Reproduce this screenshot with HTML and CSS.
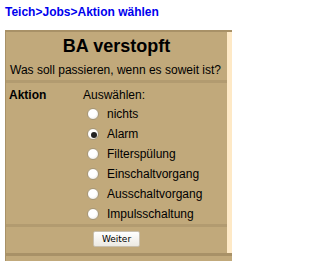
FILE: index.html
```html
<!DOCTYPE html>
<html lang="de">
<head>
<meta charset="utf-8">
<title>Aktion wählen</title>
<link rel="stylesheet" href="styles.css">
</head>
<body>
<div class="crumb"><a href="#">Teich</a>&gt;<a href="#">Jobs</a>&gt;<a href="#">Aktion wählen</a></div>
<div class="frame">
  <div class="cols">
    <div class="main">
      <div class="head">
        <h1 class="title">BA verstopft</h1>
        <p class="sub">Was soll passieren, wenn es soweit ist?</p>
      </div>
      <div class="sep"></div>
      <div class="form">
        <div class="label">Aktion</div>
        <div class="choices">
          <div class="choose">Auswählen:</div>
          <label class="opt"><input type="radio" name="a" class="radio"> nichts</label>
          <label class="opt"><input type="radio" name="a" class="radio" checked> Alarm</label>
          <label class="opt"><input type="radio" name="a" class="radio"> Filterspülung</label>
          <label class="opt"><input type="radio" name="a" class="radio"> Einschaltvorgang</label>
          <label class="opt"><input type="radio" name="a" class="radio"> Ausschaltvorgang</label>
          <label class="opt"><input type="radio" name="a" class="radio"> Impulsschaltung</label>
        </div>
      </div>
      <div class="sep"></div>
      <div class="actions"><button class="btn" type="button">Weiter</button></div>
    </div>
    <div class="side"></div>
  </div>
  <div class="line"></div>
  <div class="more"></div>
</div>
</body>
</html>
```

FILE: styles.css
```css
html, body { margin: 0; padding: 0; background: #fff; }
body { padding: 5px 0 0 5px; font-family: "Liberation Sans", Arial, sans-serif; font-size: 12px; color: #000; overflow: hidden; }
.crumb { font-weight: bold; font-size: 12px; line-height: 14px; color: #0000ee; }
.crumb a { color: #0000ee; text-decoration: none; }
.frame { width: 226px; margin-top: 11px; background: #c1a97b; border-top: 2px solid #a89167; border-left: 1px solid #a89167; }
.cols { display: flex; }
.main { width: 221px; flex: none; }
.side { flex: 1; background: #fee9c6; }
.head { padding: 3px 0 3px; text-align: center; }
.title { margin: 0; font-size: 18px; line-height: 22px; font-weight: bold; }
.sub { margin: 6px 0 0; font-size: 12px; line-height: 14px; text-align: left; padding-left: 4px; white-space: nowrap; }
.sep { height: 3px; background: #b29b70; }
.form { display: flex; padding: 5px 0 0 3px; }
.label { width: 74px; font-weight: bold; line-height: 14px; }
.choices { display: flex; flex-direction: column; }
.choose { line-height: 14px; height: 16px; }
.opt { display: flex; align-items: center; height: 20px; gap: 8px; padding-left: 4px; }
.radio { appearance: none; -webkit-appearance: none; margin: 0; width: 12px; height: 12px; border-radius: 50%; border: 1px solid #a69777; background: radial-gradient(circle at 40% 35%, #fff 0, #fff 45%, #e3e0da 100%); position: relative; flex: none; }
.radio:checked::after { content: ""; position: absolute; left: 3px; top: 3px; width: 6px; height: 6px; border-radius: 50%; background: #222; }
.actions { display: flex; justify-content: center; padding: 4px 0 6px; }
.btn { font-family: "DejaVu Sans", sans-serif; font-size: 9px; height: 16px; width: 47px; padding: 0; border: 1px solid #c8bfae; border-radius: 2px; background: linear-gradient(#fff, #ece9e2); color: #000; }
.line { height: 3px; background: #a89167; }
.more { height: 5px; }
```
